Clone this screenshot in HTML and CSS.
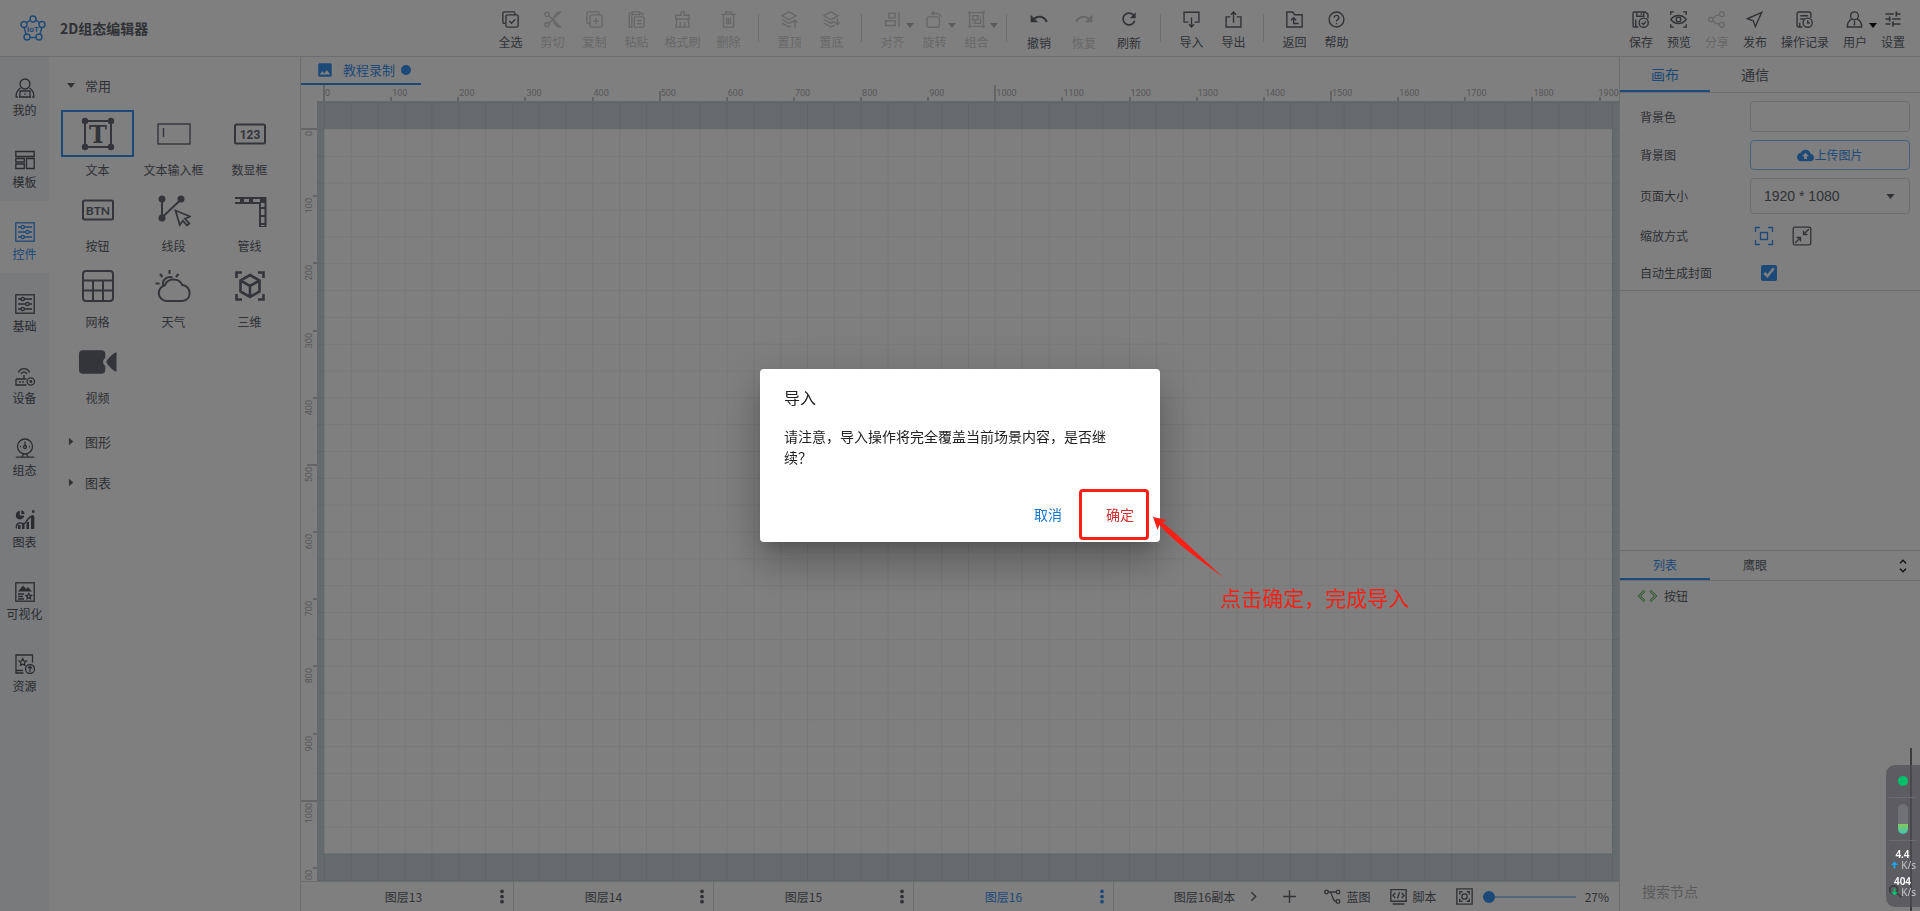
FILE: index.html
```html
<!DOCTYPE html>
<html lang="zh-CN">
<head>
<meta charset="utf-8">
<meta name="viewport" content="width=device-width, initial-scale=1">
<title>2D组态编辑器</title>
<link rel="stylesheet" href="styles.css">
</head>
<body>
<svg class="sprite" aria-hidden="true">
  <defs>
    <symbol id="i-all" viewBox="0 0 16 16"><path d="M3.5 11.7H2.2A1.4 1.4 0 0 1 .8 10.300V2.200A1.400 1.400 0 0 1 2.200.8h8.600A1.400 1.400 0 0 1 12.200 2.200v1.500"/><rect x="3.700" y="3.700" width="11.500" height="11.500" rx="1.500"/><path d="M6.700 9.300l2.200 2.200 3.700-3.700"/></symbol>
    <symbol id="i-cut" viewBox="0 0 16 16"><circle cx="2.800" cy="3.200" r="2"/><circle cx="2.800" cy="12.800" r="2"/><path d="M4.500 4.300L15.500 15M4.500 11.700L15.500 1M10 6.400l5.500-5.400h-2.200L8.800 5.300M10 9.600l5.500 5.400h-2.200L8.800 10.700"/></symbol>
    <symbol id="i-copy" viewBox="0 0 16 16"><path d="M3.500 11.700H2.200A1.400 1.400 0 0 1 .8 10.300V2.200A1.400 1.400 0 0 1 2.200.8h8.600A1.400 1.400 0 0 1 12.200 2.200v1.500"/><rect x="3.700" y="3.700" width="11.500" height="11.500" rx="1.500"/><path d="M9.500 6.500v6M6.500 9.500h6"/></symbol>
    <symbol id="i-paste" viewBox="0 0 16 16"><path d="M4.500 15H1.200V2H4M11 2h2.800v2.500M4 .8h7v2.600H4zM3.600 4v11"/><rect x="6" y="5.500" width="9.200" height="9.700" rx="1.200"/><path d="M8.300 9h4.600M8.300 12h4.600"/></symbol>
    <symbol id="i-brush" viewBox="0 0 16 16"><path d="M6.500 4V1.700a1.500 1.500 0 0 1 3 0V4h4.800v3.500H1.700V4zM2.700 7.500L1.800 15.200h12.400l-.9-7.700M6 10.500l-.4 4.500M10 10.500l.2 4.500"/></symbol>
    <symbol id="i-del" viewBox="0 0 16 16"><path d="M1 3.200h14M5.200 3V1h5.600v2M3.200 3.500v11.700h9.600V3.500M6.200 6v6.500M8 6v6.500M9.800 6v6.500"/></symbol>
    <symbol id="i-top" viewBox="0 0 16 16"><path d="M7.500.8l6.700 3.700-6.700 3.700L.8 4.500zM.8 8l6.700 3.700L11 9.800M.8 11.400l6.700 3.700L9.500 14M13.200 15.500V8.500M10.900 10.700l2.300-2.300 2.300 2.300"/></symbol>
    <symbol id="i-bottom" viewBox="0 0 16 16"><path d="M7.500.8l6.700 3.700-6.700 3.700L.8 4.500zM.8 8l6.700 3.700L11 9.800M.8 11.400l6.700 3.700L11 13.200M13.500 6.500v6M11.300 10.500l2.200 2.200 2.200-2.200"/></symbol>
    <symbol id="i-align" viewBox="0 0 16 16"><path d="M4.500 2h6v4.500h-6zM1.500 9.200h9v4.500h-9zM14.200.8v14.500"/></symbol>
    <symbol id="i-rotate" viewBox="0 0 16 16"><rect x="1" y="5.500" width="11.500" height="9.800" rx="1.500"/><path d="M6 2.200c4-.7 7 .3 8.500 3.300M7.500.3L5.600 2.300l2.200 1.500"/></symbol>
    <symbol id="i-group" viewBox="0 0 16 16"><path d="M2.500 1.500h11M2.500 14.500h11M1.500 2.500v11M14.500 2.500v11M4.300 4.300h5v4h-5zM11.700 6.500v5.200H6.500v-3M4.300 10.500v1.200M11.700 4.300v1"/><path class="solid" d="M.3.3h2.400v2.400H.3zM13.300.3h2.400v2.400h-2.400zM.3 13.300h2.400v2.400H.3zM13.300 13.300h2.400v2.400h-2.400z"/></symbol>
    <symbol id="i-undo" viewBox="0 0 24 24"><path class="solid" d="M12.500 8c-2.650 0-5.050.99-6.900 2.600L2 7v9h9l-3.620-3.620c1.390-1.160 3.160-1.880 5.120-1.880 3.540 0 6.550 2.310 7.600 5.500l2.370-.78C21.080 11.030 17.150 8 12.500 8z"/></symbol>
    <symbol id="i-redo" viewBox="0 0 24 24"><path class="solid" d="M18.400 10.600C16.550 8.990 14.150 8 11.500 8c-4.650 0-8.580 3.030-9.960 7.220L3.900 16c1.050-3.190 4.050-5.500 7.600-5.500 1.950 0 3.730.72 5.120 1.880L13 16h9V7l-3.600 3.600z"/></symbol>
    <symbol id="i-refresh" viewBox="0 0 24 24"><path class="solid" d="M17.650 6.350C16.200 4.900 14.210 4 12 4c-4.420 0-7.990 3.580-7.990 8s3.570 8 7.990 8c3.730 0 6.840-2.550 7.730-6h-2.080c-.82 2.330-3.040 4-5.650 4-3.310 0-6-2.690-6-6s2.690-6 6-6c1.660 0 3.140.69 4.220 1.780L13 11h7V4l-2.350 2.350z"/></symbol>
    <symbol id="i-import" viewBox="0 0 16 16"><path d="M5 10.500H1V1.200h14v9.300h-4M8 6v9M5.700 12.500L8 15l2.300-2.500"/></symbol>
    <symbol id="i-export" viewBox="0 0 16 16"><path d="M5 5.500H1v9.500h14V5.500h-4M8 11V1.200M5.500 3.500L8 1l2.500 2.500"/></symbol>
    <symbol id="i-back" viewBox="0 0 16 16"><path d="M.8 15V1h5.400l2 2.500h7V15zM12 11.800H7.200V6.500M4.800 8.700l2.400-2.400 2.400 2.400"/></symbol>
    <symbol id="i-help" viewBox="0 0 16 16"><circle cx="8" cy="8" r="7"/><path d="M5.800 6.300a2.200 2.200 0 1 1 3.300 1.900c-.8.4-1.100.8-1.100 1.700M8 11.200v1.300"/></symbol>
    <symbol id="i-save" viewBox="0 0 16 16"><path d="M6 15H2a1 1 0 0 1-1-1V2a1 1 0 0 1 1-1h10.500L15 3v4M4.500 1v4h6.500V1M8.800 2v1.500M3.500 15V8"/><circle cx="11" cy="11" r="4.300"/><path d="M9 11l1.600 1.600 2.600-2.800"/></symbol>
    <symbol id="i-eye" viewBox="0 0 16 16"><path d="M.7 3.500V.8h3M12.300.8h3v2.700M15.300 12.500v2.700h-3M3.700 15.200h-3v-2.700M.8 8c3.500-5 10.900-5 14.400 0-3.500 5-10.900 5-14.400 0z"/><circle cx="8" cy="8" r="2.200"/></symbol>
    <symbol id="i-share" viewBox="0 0 16 16"><circle cx="2.700" cy="8" r="2.100"/><circle cx="13" cy="3" r="2.300"/><circle cx="13" cy="13" r="2.300"/><path d="M4.700 7L7 4.500 10.700 3.500M4.700 9L7 11.500l3.700 1"/></symbol>
    <symbol id="i-send" viewBox="0 0 16 16"><path d="M14.800 1.200L1.300 7.300l5.500 1.900 2 5.500z"/></symbol>
    <symbol id="i-log" viewBox="0 0 16 16"><path d="M6 15H2.500A1.500 1.500 0 0 1 1 13.500V2.500A1.500 1.500 0 0 1 2.500 1h10A1.500 1.500 0 0 1 14 2.500v4M4 4.500h7.500M4 7.500h4M3.500 15v-4"/><circle cx="11" cy="11" r="4.300"/><path d="M11 8.800v2.500h2"/></symbol>
    <symbol id="i-user" viewBox="0 0 16 16"><circle cx="8" cy="4.500" r="3.700"/><path d="M5.500 7.500C2.500 9 1.200 11.500 1.200 15h13.600c0-3.500-1.300-6-4.300-7.500M8 9.500v4M7.300 13h1.400"/></symbol>
    <symbol id="i-tune" viewBox="0 0 24 24"><path class="solid" d="M3 17v2h6v-2H3zM3 5v2h10V5H3zm10 16v-2h8v-2h-8v-2h-2v6h2zM7 9v2H3v2h4v2h2V9H7zm14 4v-2H11v2h10zm-6-4h2V7h4V5h-4V3h-2v6z"/></symbol>

    <symbol id="r-mine" viewBox="0 0 20 20"><circle cx="10" cy="6" r="5"/><path d="M5.500 10C2 12.500.8 15.500 1.200 19h1.600M14.500 10c3.500 2.500 4.700 5.500 4.300 9h-1.600M5 13h10v6H5zM4 19h12M10 15.300v1.500"/></symbol>
    <symbol id="r-tpl" viewBox="0 0 20 20"><path d="M.8 1.500h18.400v5H.8zM.8 8.500h8.500v3.500H.8zM.8 14h8.500v4.500H.8zM11.500 8.500h7.700v10h-7.700z"/></symbol>
    <symbol id="r-ctl" viewBox="0 0 20 20"><rect x=".8" y=".8" width="18.400" height="18.400"/><path d="M3 5h3M9.500 5H17M3 10h7.500M14.500 10H17M3 15h3M9.500 15H17"/><circle cx="7.700" cy="5" r="1.700"/><circle cx="12.500" cy="10" r="1.700"/><circle cx="7.700" cy="15" r="1.700"/></symbol>
    <symbol id="r-dev" viewBox="0 0 20 20"><path d="M3.500 6.500a5.800 5.800 0 0 1 11 0M6 8a3.200 3.200 0 0 1 6 0M9 9v4M1 13h10.500M1 13v6h10.500M5 15v2M8 15v2"/><circle cx="15.800" cy="15.500" r="3.700"/><circle cx="15.800" cy="15.500" r=".8"/></symbol>
    <symbol id="r-scada" viewBox="0 0 20 20"><circle cx="10" cy="8.500" r="7.500"/><circle cx="10" cy="9" r="1.500"/><path d="M10 3.500V8M5 8.500h1M14 8.500h1M8.500 16L7 19M11.500 16l1.500 3M.8 19.200h18.400"/></symbol>
    <symbol id="r-chart" viewBox="0 0 20 20"><path class="solid" d="M4.800 1a4.200 4.200 0 1 0 4.400 4.600H4.800zM6.300.3v3.800h3.300A4 4 0 0 0 6.300.3zM3 15h2.500v4H3zM7 14h2.500v5H7zM11.500 12H14v7h-2.500zM16 6h3.300v13H16zM17 .3h2.500v2.500H17z"/><path d="M1.500 18.500c-.5-3 .5-5 3-5.500s3 1 5 .5 3-7 9-8"/></symbol>
    <symbol id="r-vis" viewBox="0 0 20 20"><rect x=".8" y=".8" width="18.400" height="18.400"/><path class="solid" d="M3 9.500l5-6 3 3.500 2-2 4 4.500z"/><path d="M3 12h6M3 14.500h5M3 17h6M13.800 11.500l.9 1.700 1.900.3-1.400 1.300.3 1.900-1.700-.9-1.700.9.3-1.900-1.400-1.300 1.900-.3z"/></symbol>
    <symbol id="r-res" viewBox="0 0 20 20"><path d="M17.500 8.500V1H1v15.500h7M1 16.500V19h7.500M7.700 4.500l1.100 2.300 2.500.3-1.800 1.800.4 2.500-2.200-1.200-2.200 1.200.4-2.500-1.800-1.800 2.500-.3z"/><circle cx="15" cy="15" r="4.500"/><path d="M15 18v-5.500M13 14.300l2-2 2 2"/></symbol>

    <symbol id="w-text" viewBox="0 0 34 34"><path d="M4 4h26v26H4z"/><g class="solid"><circle cx="4" cy="4" r="3.200"/><circle cx="30" cy="4" r="3.200"/><circle cx="4" cy="30" r="3.200"/><circle cx="30" cy="30" r="3.200"/></g><text class="glyph slab" x="17" y="25.500">T</text></symbol>
    <symbol id="w-input" viewBox="0 0 34 34"><rect class="thin" x="1" y="7" width="32" height="20"/><path class="thin" d="M6.500 11v9"/></symbol>
    <symbol id="w-num" viewBox="0 0 34 34"><rect x="2" y="7.500" width="30" height="19" rx="1.500"/><text class="glyph num" x="17" y="21.500">123</text></symbol>
    <symbol id="w-btn" viewBox="0 0 34 34"><rect x="2" y="7.500" width="30" height="19" rx="1.500"/><text class="glyph btn" x="17" y="21.500">BTN</text></symbol>
    <symbol id="w-line" viewBox="0 0 34 34"><path d="M5 6.500v18L24 6.500"/><g class="solid"><circle cx="5" cy="6" r="3.500"/><circle cx="24" cy="6" r="3.500"/><circle cx="5" cy="25" r="3.500"/></g><path class="mid-stroke paper" d="M18.500 17.500l14.500 6-5 2.300 4.300 4.700-2.300 2-4.200-4.800-3 4.300z"/></symbol>
    <symbol id="w-pipe" viewBox="0 0 34 34"><path d="M2 5h30.500M2 10h25v24M32.500 4v30M27 34h6"/><path class="heavy" d="M7 7.500h4M16 7.500h4M27 7.500h5M29.800 14v2M29.800 22v2M29.800 30v2"/></symbol>
    <symbol id="w-grid" viewBox="0 0 34 34"><rect x="2" y="2" width="30" height="30" rx="3"/><path d="M2 11.500h30M2 21.500h30M12 11.500V32M22 11.500V32"/></symbol>
    <symbol id="w-sky" viewBox="0 0 38 34"><path d="M12 32a8 8 0 0 1-1.500-15.800c2.500-7.500 14-7.700 17.300-.2C37 16.500 38 31 28 32zM8.500 16a7 7 0 0 1 9.500-7.500M15 1v4M5.500 5l2.500 3M24 5l-2.500 3M1 14.500h4"/></symbol>
    <symbol id="w-3d" viewBox="0 0 34 34"><path class="bold" d="M3.500 9V3.500H9M25 3.500h5.500V9M30.500 25v5.500H25M9 30.500H3.500V25M17 6l9.500 5.500v11L17 28l-9.500-5.500v-11zM7.500 11.500L17 17l9.500-5.500M17 17v11"/></symbol>
    <symbol id="w-video" viewBox="0 0 40 26"><path class="solid" d="M5 1h19a4 4 0 0 1 4 4v4c-3 2-3 6 0 8v4a4 4 0 0 1-4 4H5a4 4 0 0 1-4-4V5a4 4 0 0 1 4-4zM39.500 3v20c-2 0-10-7-10.500-10 .5-3 8.500-10 10.500-10z"/></symbol>
    <symbol id="caret" viewBox="0 0 10 6"><path class="solid" d="M0 0h10L5 6z"/></symbol>
    <symbol id="m-dots" viewBox="0 0 4 16"><g class="solid"><circle cx="2" cy="2.500" r="2"/><circle cx="2" cy="8" r="2"/><circle cx="2" cy="13.500" r="2"/></g></symbol>
  </defs>
</svg>

<div class="app">
  <header class="header">
    <div class="brand">
      <svg class="logo" viewBox="0 0 26 26" aria-hidden="true"><path d="M10.500 5L6 8M15.500 5L20 8M4 12l2 7M22 12l-2 7M10 22.500h6"/><circle cx="13" cy="4" r="3"/><circle cx="4" cy="9.500" r="3"/><circle cx="22" cy="9.500" r="3"/><circle cx="7" cy="22" r="3"/><circle cx="19" cy="22" r="3"/><text x="13" y="17">IoT</text></svg>
      <h1 class="title">2D组态编辑器</h1>
    </div>
    <nav class="tools" aria-label="工具栏">
      <button class="tool"><svg class="ico"><use href="#i-all"/></svg>全选</button>
      <button class="tool" disabled><svg class="ico"><use href="#i-cut"/></svg>剪切</button>
      <button class="tool" disabled><svg class="ico"><use href="#i-copy"/></svg>复制</button>
      <button class="tool" disabled><svg class="ico"><use href="#i-paste"/></svg>粘贴</button>
      <button class="tool" disabled><svg class="ico"><use href="#i-brush"/></svg>格式刷</button>
      <button class="tool" disabled><svg class="ico"><use href="#i-del"/></svg>删除</button>
      <span class="split"></span>
      <button class="tool" disabled><svg class="ico"><use href="#i-top"/></svg>置顶</button>
      <button class="tool" disabled><svg class="ico"><use href="#i-bottom"/></svg>置底</button>
      <span class="split"></span>
      <button class="tool" disabled><svg class="ico"><use href="#i-align"/></svg>对齐<svg class="drop"><use href="#caret"/></svg></button>
      <button class="tool" disabled><svg class="ico"><use href="#i-rotate"/></svg>旋转<svg class="drop"><use href="#caret"/></svg></button>
      <button class="tool" disabled><svg class="ico"><use href="#i-group"/></svg>组合<svg class="drop"><use href="#caret"/></svg></button>
      <span class="split"></span>
      <button class="tool tool-lg"><svg class="ico"><use href="#i-undo"/></svg>撤销</button>
      <button class="tool tool-lg" disabled><svg class="ico"><use href="#i-redo"/></svg>恢复</button>
      <button class="tool tool-lg"><svg class="ico"><use href="#i-refresh"/></svg>刷新</button>
      <span class="split"></span>
      <button class="tool"><svg class="ico"><use href="#i-import"/></svg>导入</button>
      <button class="tool"><svg class="ico"><use href="#i-export"/></svg>导出</button>
      <span class="split"></span>
      <button class="tool"><svg class="ico"><use href="#i-back"/></svg>返回</button>
      <button class="tool"><svg class="ico"><use href="#i-help"/></svg>帮助</button>
    </nav>
    <nav class="tools tools-right" aria-label="项目操作">
      <button class="tool"><svg class="ico"><use href="#i-save"/></svg>保存</button>
      <button class="tool"><svg class="ico"><use href="#i-eye"/></svg>预览</button>
      <button class="tool" disabled><svg class="ico"><use href="#i-share"/></svg>分享</button>
      <button class="tool"><svg class="ico"><use href="#i-send"/></svg>发布</button>
      <button class="tool"><svg class="ico"><use href="#i-log"/></svg>操作记录</button>
      <button class="tool"><svg class="ico"><use href="#i-user"/></svg>用户<svg class="drop drop-dark"><use href="#caret"/></svg></button>
      <button class="tool"><svg class="ico ico-lg"><use href="#i-tune"/></svg>设置</button>
    </nav>
  </header>

  <div class="workspace">
    <nav class="rail" aria-label="资源分类">
      <button class="rail-item"><svg class="rail-ico"><use href="#r-mine"/></svg>我的</button>
      <button class="rail-item"><svg class="rail-ico"><use href="#r-tpl"/></svg>模板</button>
      <button class="rail-item active"><svg class="rail-ico"><use href="#r-ctl"/></svg>控件</button>
      <button class="rail-item"><svg class="rail-ico"><use href="#r-ctl"/></svg>基础</button>
      <button class="rail-item"><svg class="rail-ico"><use href="#r-dev"/></svg>设备</button>
      <button class="rail-item"><svg class="rail-ico"><use href="#r-scada"/></svg>组态</button>
      <button class="rail-item"><svg class="rail-ico"><use href="#r-chart"/></svg>图表</button>
      <button class="rail-item"><svg class="rail-ico"><use href="#r-vis"/></svg>可视化</button>
      <button class="rail-item"><svg class="rail-ico"><use href="#r-res"/></svg>资源</button>
    </nav>

    <aside class="library">
      <button class="group group-open"><svg class="fold"><use href="#caret"/></svg>常用</button>
      <div class="widgets">
        <button class="widget selected"><span class="thumb"><svg><use href="#w-text"/></svg></span>文本</button>
        <button class="widget"><span class="thumb"><svg><use href="#w-input"/></svg></span>文本输入框</button>
        <button class="widget"><span class="thumb"><svg><use href="#w-num"/></svg></span>数显框</button>
        <button class="widget"><span class="thumb"><svg><use href="#w-btn"/></svg></span>按钮</button>
        <button class="widget"><span class="thumb"><svg><use href="#w-line"/></svg></span>线段</button>
        <button class="widget"><span class="thumb"><svg><use href="#w-pipe"/></svg></span>管线</button>
        <button class="widget"><span class="thumb"><svg><use href="#w-grid"/></svg></span>网格</button>
        <button class="widget"><span class="thumb"><svg class="wide"><use href="#w-sky"/></svg></span>天气</button>
        <button class="widget"><span class="thumb"><svg><use href="#w-3d"/></svg></span>三维</button>
        <button class="widget"><span class="thumb"><svg class="wide"><use href="#w-video"/></svg></span>视频</button>
      </div>
      <button class="group"><svg class="fold closed"><use href="#caret"/></svg>图形</button>
      <button class="group"><svg class="fold closed"><use href="#caret"/></svg>图表</button>
    </aside>

    <main class="editor">
      <div class="doc-tabs">
        <button class="doc-tab"><svg class="doc-ico" viewBox="0 0 24 24"><path class="solid" d="M21 19V5c0-1.100-.9-2-2-2H5c-1.100 0-2 .9-2 2v14c0 1.100.9 2 2 2h14c1.100 0 2-.9 2-2zM8.500 13.500l2.500 3.010L14.500 12l4.500 6H5l3.500-4.500z"/></svg>教程录制<span class="dirty"></span></button>
      </div>
      <div class="ruler ruler-x">
        <span class="major">0</span><span>100</span><span>200</span><span>300</span><span>400</span><span class="mid">500</span><span>600</span><span>700</span><span>800</span><span>900</span><span class="major">1000</span><span>1100</span><span>1200</span><span>1300</span><span>1400</span><span class="mid">1500</span><span>1600</span><span>1700</span><span>1800</span><span>1900</span>
      </div>
      <div class="ruler ruler-y">
        <span class="major"><i>0</i></span><span><i>100</i></span><span><i>200</i></span><span><i>300</i></span><span><i>400</i></span><span class="mid"><i>500</i></span><span><i>600</i></span><span><i>700</i></span><span><i>800</i></span><span><i>900</i></span><span class="major"><i>1000</i></span><span><i>1100</i></span>
      </div>
      <div class="stage">
        <svg class="sheet" viewBox="0 0 1920 1080" aria-label="画布">
          <defs><pattern id="grid" width="40" height="40" patternUnits="userSpaceOnUse"><path d="M0 0H40M0 0V40" class="grid-line"/></pattern></defs>
          <rect class="paper-fill" width="1920" height="1080"/>
          <rect x="-40" y="-80" width="2000" height="1240" fill="url(#grid)" stroke="none"/>
        </svg>
      </div>
      <footer class="footer">
        <div class="layers">
          <button class="layer">图层13<svg class="dots"><use href="#m-dots"/></svg></button>
          <button class="layer">图层14<svg class="dots"><use href="#m-dots"/></svg></button>
          <button class="layer">图层15<svg class="dots"><use href="#m-dots"/></svg></button>
          <button class="layer active">图层16<svg class="dots"><use href="#m-dots"/></svg></button>
          <button class="layer">图层16副本</button>
        </div>
        <button class="foot-btn" aria-label="下一页"><svg class="foot-ico" viewBox="0 0 16 16"><path d="M6 4l4 4-4 4"/></svg></button>
        <button class="foot-btn foot-add" aria-label="新增图层"><svg class="foot-ico" viewBox="0 0 16 16"><path d="M8 2v12M2 8h12"/></svg></button>
        <button class="foot-btn"><svg class="foot-ico" viewBox="0 0 17 16"><circle cx="2.500" cy="3.500" r="1.800"/><circle cx="14" cy="3.500" r="1.800"/><circle cx="14" cy="13" r="1.800"/><path d="M4.300 3.500h8M6 3.500c2.500 1 2 9 6 9.500"/></svg>蓝图</button>
        <button class="foot-btn foot-script"><svg class="foot-ico" viewBox="0 0 16 16"><path d="M.8 1.500h14.400v11H.8zM5 4.500L2.800 7 5 9.500M11 4.500L13.200 7 11 9.500M9 4L7 10M2.500 15h11"/></svg>脚本</button>
        <button class="foot-btn foot-fit" aria-label="适应画布"><svg class="foot-ico" viewBox="0 0 16 16"><path d="M.8.8h14.400v14.400H.8zM3.500 6V3.500H6M10 3.500h2.500V6M12.500 10v2.500H10M6 12.500H3.500V10"/><circle cx="8" cy="8" r="2.500"/></svg></button>
        <label class="zoom"><input class="zoom-range" type="range" min="0" max="100" value="0" aria-label="缩放"><span>27%</span></label>
      </footer>
    </main>

    <aside class="props">
      <section class="props-top">
        <div class="tabs">
          <button class="tab active">画布</button>
          <button class="tab">通信</button>
        </div>
        <form class="form">
          <label for="bg-color">背景色</label>
          <input id="bg-color" class="field field-color" type="text">
          <label for="bg-image">背景图</label>
          <button id="bg-image" class="field upload" type="button"><svg class="cloud" viewBox="0 0 24 24"><path class="solid" d="M19.350 10.040C18.670 6.590 15.640 4 12 4 9.110 4 6.600 5.640 5.350 8.040 2.340 8.360 0 10.910 0 14c0 3.310 2.690 6 6 6h13c2.760 0 5-2.240 5-5 0-2.640-2.050-4.780-4.650-4.960zM14 13v4h-4v-4H7l5-5 5 5h-3z"/></svg>上传图片</button>
          <label for="page-size">页面大小</label>
          <div class="select-box"><select id="page-size" class="field size"><option>1920 * 1080</option></select><svg class="select-caret"><use href="#caret"/></svg></div>
          <span>缩放方式</span>
          <div class="modes">
            <button class="mode active" type="button" aria-label="铺满"><svg viewBox="0 0 20 20"><path d="M1.500 6V1.500H6M14 1.500h4.500V6M18.500 14v4.500H14M6 18.500H1.500V14M6.500 6.500h7v7h-7z"/></svg></button>
            <button class="mode" type="button" aria-label="缩放"><svg viewBox="0 0 20 20"><rect x="1.200" y="1.200" width="17.600" height="17.600" rx="1.500"/><path d="M17 3l-5.500 5.500M11.500 4.500v4h4M3 17l5.500-5.500M4.500 11.500h4v4"/></svg></button>
          </div>
          <label for="auto-cover">自动生成封面</label>
          <input id="auto-cover" class="check" type="checkbox" checked>
        </form>
      </section>
      <section class="props-bottom">
        <div class="tabs tabs-sm">
          <button class="tab active">列表</button>
          <button class="tab">鹰眼</button>
          <button class="unfold" aria-label="展开"><svg viewBox="0 0 24 24"><path class="solid" d="M12 5.830L15.170 9l1.410-1.410L12 3 7.410 7.590 8.830 9 12 5.830zm0 12.340L8.830 15l-1.410 1.410L12 21l4.590-4.590L15.170 15 12 18.170z"/></svg></button>
        </div>
        <ul class="nodes">
          <li class="node"><svg class="code" viewBox="0 0 22 14"><path d="M8.500 2.500L7 1 1 7l6 6 1.500-1.500L4 7zM13.500 2.500L15 1l6 6-6 6-1.500-1.500L18 7z"/></svg>按钮</li>
        </ul>
        <div class="search">
          <input class="search-input" type="text" placeholder="搜索节点" aria-label="搜索节点">
          <svg class="search-ico" viewBox="0 0 16 16"><circle cx="6.500" cy="6.500" r="4.500"/><path d="M10 10l5 5"/></svg>
        </div>
      </section>
    </aside>
  </div>
</div>

<div class="backdrop">
  <div class="dialog" role="dialog" aria-labelledby="dialog-title">
    <h2 class="dialog-title" id="dialog-title">导入</h2>
    <p class="dialog-text">请注意，导入操作将完全覆盖当前场景内容，是否继续？</p>
    <div class="dialog-actions">
      <button class="action">取消</button>
      <button class="action action-danger">确定</button>
    </div>
    <span class="mark"></span>
    <svg class="arrow" viewBox="0 0 72 62" aria-hidden="true"><path d="M0 0L14 3 9.500 5.500C30 22 50 42 71.500 61.500 46 42 22 26 6.500 8L4.500 13z"/></svg>
    <p class="note">点击确定，完成导入</p>
  </div>
</div>

<span class="edge-line"></span>
<aside class="monitor">
  <span class="status"></span>
  <span class="gauge-row"><span class="gauge"></span></span>
  <dl class="net">
    <dt>4.4</dt><dd><svg viewBox="0 0 8 8" class="up"><path class="solid" d="M4 0l4 4H5v4H3V4H0z"/></svg>K/s</dd>
    <dt>404</dt><dd><svg viewBox="0 0 8 8" class="down"><path class="solid" d="M4 8L0 4h3V0h2v4h3z"/></svg>K/s</dd>
  </dl>
</aside>
</body>
</html>
```

FILE: styles.css
```css
:root {
  --blue: #3b93f0;
  --ink: #60646c;
  --line: #d9dbdd;
  --mute: #cfcfd0;
  --rail: #f0f4f9;
  --stage: #cbd5da;
  --sans: "Liberation Sans", "Noto Sans CJK SC", sans-serif;
  --cjk: "Noto Sans CJK SC", "Noto Sans", sans-serif;
}

* { box-sizing: border-box; }

body {
  margin: 0;
  height: 100vh;
  overflow: hidden;
  background: #fff;
  color: var(--ink);
  font: 12px/16px var(--cjk);
}

button, input, select { font: inherit; color: inherit; }
button { margin: 0; padding: 0; border: 0; background: none; }

.sprite { position: absolute; width: 0; height: 0; }

svg { fill: none; stroke: currentColor; stroke-width: 1.3; flex: none; }
.solid { fill: currentColor; stroke: none; }

.app { display: flex; flex-direction: column; height: 100%; }

/* header */
.header {
  display: flex;
  justify-content: space-between;
  height: 57px;
  border-bottom: 1px solid var(--line);
}
.brand { display: flex; align-items: center; gap: 14px; width: 225px; padding-left: 20px; }
.logo { width: 26px; height: 26px; color: var(--blue); stroke-width: 1.4; }
.logo text { fill: currentColor; stroke: none; font: bold 8px var(--sans); text-anchor: middle; }
.title { margin: 0; font-size: 14px; line-height: 20px; font-weight: 700; }

.tools { display: flex; align-items: flex-start; }
.tool {
  position: relative;
  display: flex;
  flex-direction: column;
  align-items: center;
  gap: 6px;
  min-width: 42px;
  padding: 11px 7px 0;
  white-space: nowrap;
}
.tool:disabled { color: var(--mute); }
.tool-lg { min-width: 45px; padding-top: 9px; }
.ico { width: 17px; height: 17px; }
.tool-lg .ico { width: 20px; height: 20px; }
.tools-right { padding-right: 8px; }
.tools-right .tool { min-width: 38px; }
.tools-right .ico-lg { width: 20px; height: 20px; margin: -2px 0 -1px; }
.drop { position: absolute; top: 23px; right: -1px; width: 8px; height: 5px; color: #b8b8b9; }
.drop-dark { right: -3px; color: #111; }
.split { width: 1px; height: 28px; margin: 14px 9px 0; background: var(--line); }

.workspace { display: flex; flex: 1; min-height: 0; }

/* left rail */
.rail { display: flex; flex-direction: column; width: 49px; background: var(--rail); }
.rail-item {
  display: flex;
  flex-direction: column;
  align-items: center;
  gap: 4px;
  height: 72px;
  padding-top: 21px;
  color: #55585e;
}
.rail-item.active { background: #fff; color: var(--blue); }
.rail-ico { width: 20px; height: 20px; }

/* widget library */
.library { width: 252px; padding: 8px 0 0 12px; border-right: 1px solid var(--line); }
.group {
  display: flex;
  align-items: center;
  gap: 10px;
  width: 100%;
  height: 41px;
  padding-left: 6px;
  font-size: 13px;
}
.fold { width: 8px; height: 5px; }
.fold.closed { transform: rotate(-90deg); }
.widgets { display: grid; grid-template-columns: repeat(3, 73px); gap: 3px; padding: 4px 0 10px; }
.widget { display: flex; flex-direction: column; align-items: center; gap: 5px; height: 73px; white-space: nowrap; }
.thumb {
  display: grid;
  place-items: center;
  width: 73px;
  height: 47px;
  border: 2px solid transparent;
  color: #666a76;
}
.thumb svg { width: 34px; height: 34px; stroke-width: 2; }
.thumb svg.wide { width: 39px; }
.selected .thumb { border-color: var(--blue); }
.thin { stroke-width: 1.4; }
.mid-stroke { stroke-width: 1.8; }
.bold { stroke-width: 2.600; }
.heavy { stroke-width: 5; }
.paper { fill: #fff; }
.glyph { fill: currentColor; stroke: none; text-anchor: middle; }
.slab { font: bold 24px "DejaVu Serif", serif; }
.num { font: bold 12px Roboto, sans-serif; }
.btn { font: bold 12px Lato, sans-serif; }

/* editor */
.editor {
  display: grid;
  flex: 1;
  grid-template: 28px 16px minmax(0, 1fr) 30px / 16px minmax(0, 1fr);
  min-width: 0;
}
.doc-tabs { grid-column: 1 / 3; }
.doc-tab {
  display: flex;
  align-items: center;
  gap: 6px;
  height: 28px;
  padding: 0 10px 0 15px;
  border-bottom: 2px solid var(--blue);
  color: var(--blue);
  font-size: 13px;
}
.doc-ico { width: 18px; height: 18px; margin-right: 3px; }
.dirty { width: 10px; height: 10px; border-radius: 50%; background: var(--blue); }

.ruler { display: grid; overflow: hidden; color: #aeaeb2; font: 9px/12px Roboto, sans-serif; }
.ruler-x { grid-column: 2; grid-template-columns: repeat(19, 100fr) 20fr; padding: 0 7px 0 6px; }
.ruler-x span {
  min-width: 0;
  padding: 2px 0 0 2px;
  background: linear-gradient(#c8c8cb, #c8c8cb) 0 100% / 2px 4px no-repeat;
}
.ruler-x .mid { background-size: 2px 10px; }
.ruler-x .major { background-size: 2px 16px; }
.ruler-x span:last-child { padding-left: 0; }
.ruler-y { grid-column: 1; grid-template-rows: repeat(11, 100fr) 21fr; padding-top: 27px; }
.ruler-y span {
  min-height: 0;
  padding: 3px 0 0 2px;
  background: linear-gradient(#c8c8cb, #c8c8cb) 100% 0 / 4px 2px no-repeat;
}
.ruler-y .mid { background-size: 10px 2px; }
.ruler-y .major { background-size: 16px 2px; }
.ruler-y i { display: block; width: 12px; font-style: normal; writing-mode: vertical-rl; transform: rotate(180deg); }

.stage {
  display: flex;
  align-items: center;
  padding: 0 7px;
  overflow: hidden;
  background: var(--stage);
}
.sheet { width: 100%; overflow: visible; stroke: none; }
.paper-fill { fill: #fff; }
.grid-line { stroke: #0000000f; stroke-width: 3; }

.footer {
  grid-column: 1 / 3;
  display: flex;
  align-items: center;
  border-top: 1px solid var(--line);
}
.layers { display: flex; flex: 1; align-self: stretch; overflow: hidden; padding-left: 13px; }
.layer {
  position: relative;
  flex: 0 0 200px;
  padding-right: 20px;
  border-right: 1px solid var(--line);
}
.layer:last-child { padding-right: 18px; }
.layer.active { color: var(--blue); }
.dots { position: absolute; top: 7px; right: 9px; width: 4px; height: 15px; }
.foot-btn { display: flex; align-items: center; gap: 6px; }
.foot-ico { width: 17px; height: 17px; }
.foot-add { margin: 0 26px 0 19px; }
.foot-script { margin: 0 19px; }
.zoom { display: flex; align-items: center; gap: 9px; padding: 0 10px; }
.zoom-range { width: 93px; height: 12px; margin: 0; appearance: none; background: none; }
.zoom-range::-webkit-slider-runnable-track { height: 2px; background: #a5cbf6; }
.zoom-range::-webkit-slider-thumb {
  appearance: none;
  width: 12px;
  height: 12px;
  margin-top: -5px;
  border-radius: 50%;
  background: var(--blue);
}

/* properties */
.props { display: flex; flex-direction: column; width: 301px; border-left: 1px solid var(--line); }
.props-top { flex: 1; }
.tabs { display: flex; height: 36px; border-bottom: 1px solid var(--line); font-size: 14px; }
.tab { width: 90px; border-bottom: 2px solid transparent; }
.tab.active { border-color: var(--blue); color: var(--blue); }
.form {
  display: grid;
  grid-template-columns: 110px minmax(0, 1fr);
  grid-template-rows: 31px 30px 36px 28px 30px;
  align-items: center;
  row-gap: 8px;
  padding: 8px 10px 2px 20px;
  border-bottom: 1px solid var(--line);
}
.field { width: 100%; height: 100%; border: 1px solid var(--line); border-radius: 4px; background: #fff; }
.upload { display: flex; align-items: center; justify-content: center; border-color: #8fbff5; color: var(--blue); }
.cloud { width: 17px; height: 17px; }
.select-box { display: grid; align-items: center; height: 36px; }
.size { grid-area: 1 / 1; padding: 0 13px; appearance: none; font: 14px/20px var(--sans); }
.select-caret { grid-area: 1 / 1; justify-self: end; width: 9px; height: 5px; margin-right: 15px; }
.modes { display: flex; gap: 18px; padding-left: 4px; }
.mode { display: flex; }
.mode svg { width: 20px; height: 20px; }
.mode.active { color: var(--blue); }
.check { width: 16px; height: 16px; margin: 0 0 0 11px; accent-color: var(--blue); }

.props-bottom { display: flex; flex-direction: column; height: 361px; border-top: 1px solid var(--line); }
.tabs-sm { height: 30px; font-size: 12px; }
.unfold { display: flex; align-items: center; margin-left: auto; padding-right: 8px; color: #222; }
.unfold svg { width: 18px; height: 18px; }
.nodes { flex: 1; margin: 0; padding: 7px 17px; list-style: none; }
.node { display: flex; align-items: center; gap: 6px; }
.code { width: 21px; height: 14px; color: #67b467; fill: #b9dfb9; stroke-width: 1; }
.search { display: flex; align-items: center; height: 40px; padding: 0 18px 0 20px; }
.search-input { flex: 1; min-width: 0; border: 0; background: none; font-size: 14px; line-height: 20px; }
.search-input::placeholder { color: #b4b4b6; }
.search-ico { width: 14px; height: 14px; stroke-width: 2; color: #222; }

/* dialog */
.backdrop {
  position: fixed;
  inset: 0;
  display: grid;
  place-items: center;
  background: rgba(0, 0, 0, 0.5);
}
.dialog {
  position: relative;
  width: 400px;
  padding: 15px 24px 10px;
  border-radius: 4px;
  background: #fff;
  color: #222;
  box-shadow: 0 11px 15px -7px rgba(0, 0, 0, 0.2), 0 24px 38px 3px rgba(0, 0, 0, 0.14), 0 9px 46px 8px rgba(0, 0, 0, 0.12);
}
.dialog-title { margin: 0 0 16px; font-size: 16px; line-height: 26px; font-weight: 400; }
.dialog-text { margin: 0; padding-right: 16px; font-size: 14px; line-height: 21px; }
.dialog-actions { display: flex; justify-content: flex-end; gap: 28px; padding-top: 29px; }
.action { min-width: 44px; padding: 0 2px 0 14px; font-size: 14px; line-height: 35px; color: #1976d2; }
.action-danger { color: #d32f2f; }

.mark { position: absolute; left: 319px; top: 120px; width: 70px; height: 51px; border: 3px solid #fb2015; border-radius: 4px; }
.arrow { position: absolute; left: 393px; top: 148px; width: 72px; height: 62px; fill: #fb2015; stroke: none; }
.note { position: absolute; left: 460px; top: 212px; margin: 0; color: #fb2015; font-size: 21px; line-height: 32px; white-space: nowrap; }

/* network monitor */
.edge-line { position: fixed; right: 8px; bottom: 0; width: 2px; height: 163px; background: #3c3c3c; }
.monitor {
  position: fixed;
  right: 0;
  bottom: 4px;
  width: 34px;
  height: 142px;
  padding: 11px 4px 0 3px;
  border-radius: 9px 0 0 9px;
  background: rgba(78, 79, 84, 0.7);
  color: #fff;
}
.status { display: block; width: 10px; height: 10px; margin: 0 auto; border-radius: 50%; background: #00c06a; }
.gauge-row { display: block; margin-top: 11px; padding: 6px 0; border: solid #6a6b70; border-width: 1px 0; }
.gauge {
  display: block;
  width: 10px;
  height: 30px;
  margin: 0 auto;
  border-radius: 5px;
  background: linear-gradient(#707176 66%, #84c95a 66%, #3fc3b4);
}
.net { margin: 7px 0 0; font: 10px/10px "Noto Sans", sans-serif; text-align: center; }
.net dt { line-height: 12px; font-weight: 600; }
.net dd { display: flex; align-items: center; justify-content: flex-end; gap: 3px; margin: 0 0 5px; color: #c9c9cb; }
.net svg { width: 7px; height: 8px; }
.up { color: #1ba4f8; }
.down { color: #00c06a; }
```
